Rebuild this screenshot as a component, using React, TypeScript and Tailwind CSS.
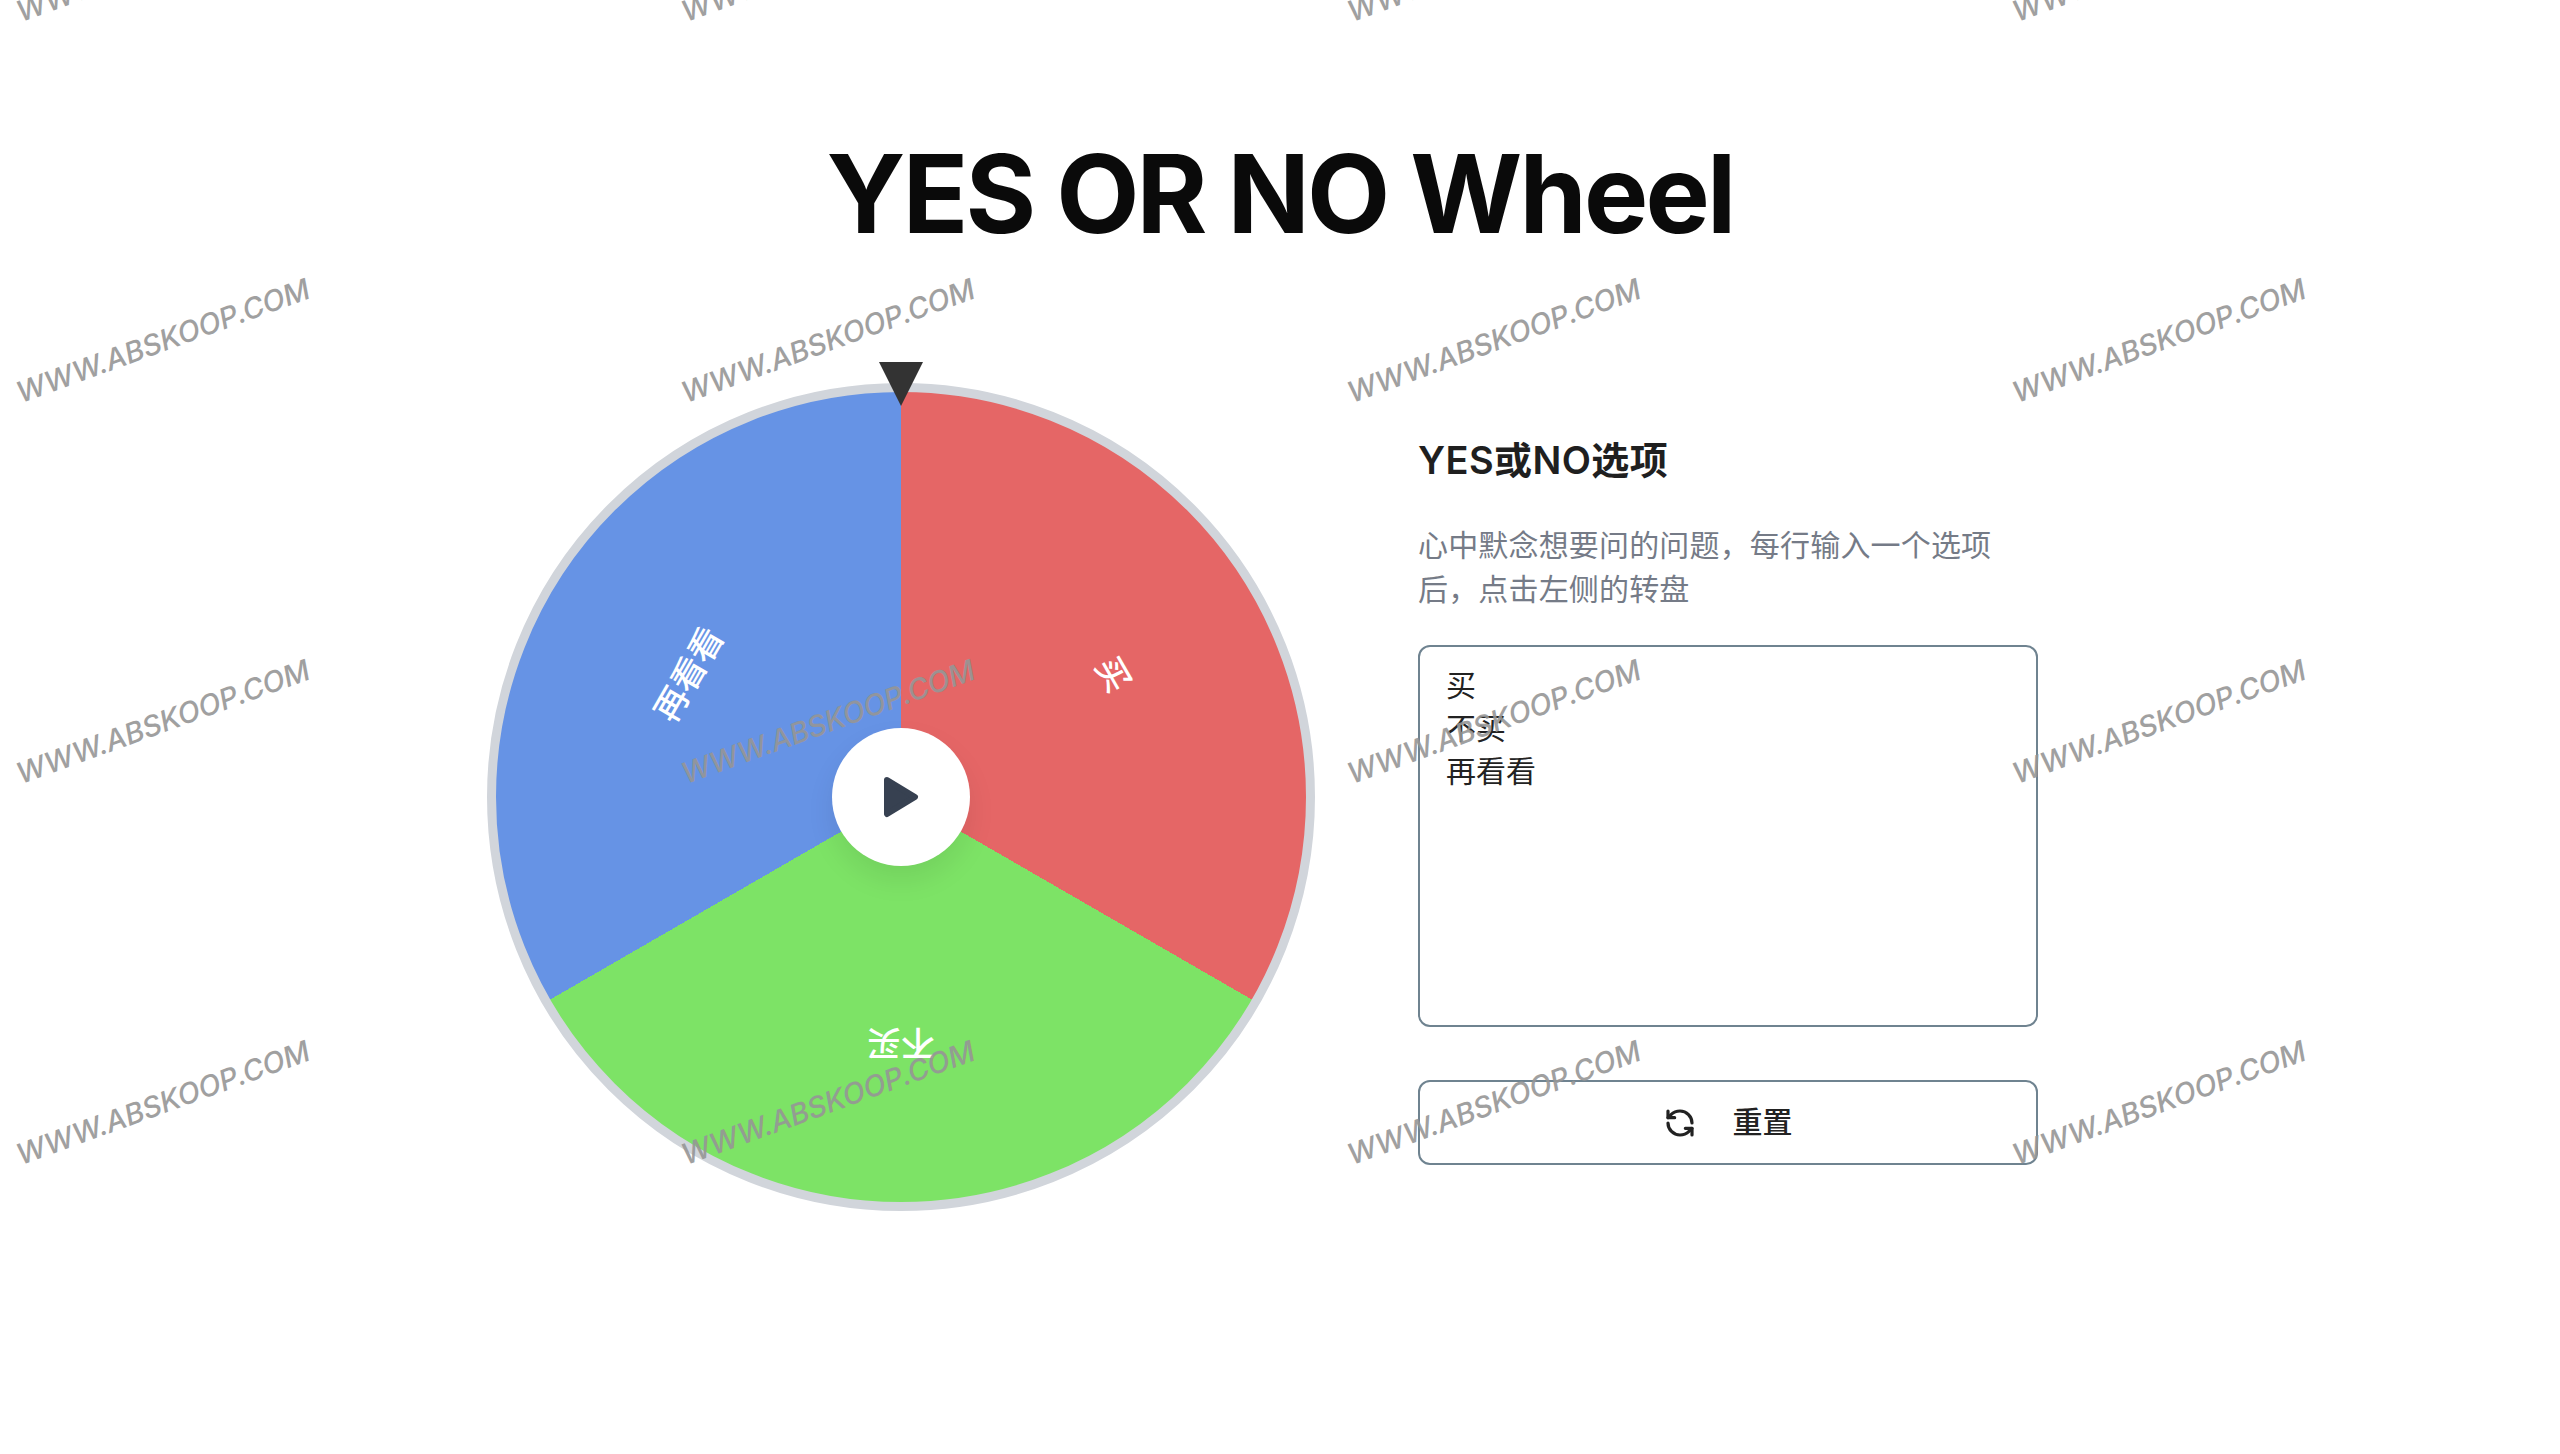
import { RefreshCcw } from 'lucide-react';

const FONT = "font-['Inter','Noto_Sans_CJK_SC',sans-serif]";

const watermarks = Array.from({ length: 16 }, (_, i) => i);

function Watermarks() {
  return (
    <div className="absolute -left-[170px] -top-[231px] grid grid-cols-[repeat(4,665.5px)] auto-rows-[381px] pointer-events-none">
      {watermarks.map(i => (
        <div key={i} className="flex items-center justify-center">
          <span className="-rotate-[20deg] italic whitespace-nowrap text-[29px] leading-none font-medium tracking-[-0.1px] text-[#969696] opacity-90 font-['Inter',sans-serif]">
            WWW.ABSKOOP.COM
          </span>
        </div>
      ))}
    </div>
  );
}

function Wheel() {
  return (
    <div className="relative w-[828px] h-[828px] flex-shrink-0">
      <div className="relative w-full h-full rounded-full border-[9px] border-[#d1d5db] bg-[conic-gradient(#e56666_0deg_120deg,#7de366_120deg_240deg,#6693e5_240deg_360deg)] overflow-hidden">
        {/* Labels */}
        <div className="absolute inset-0 flex items-center justify-center rotate-[60deg]">
          <span className="-translate-y-[246px] text-[34px] font-medium text-white">买</span>
        </div>
        <div className="absolute inset-0 flex items-center justify-center rotate-[180deg]">
          <span className="-translate-y-[247px] text-[34px] font-medium text-white">不买</span>
        </div>
        <div className="absolute inset-0 flex items-center justify-center rotate-[300deg]">
          <span className="-translate-y-[246px] text-[34px] font-medium text-white">再看看</span>
        </div>
      </div>

      {/* Pointer */}
      <svg className="absolute -top-[21px] left-[392px] w-[44px] h-[44px]" viewBox="0 0 44 44">
        <polygon points="0,0 44,0 22,44" fill="#333333" />
      </svg>

      {/* Spin button */}
      <div className="absolute inset-0 flex items-center justify-center">
        <button className="w-[138px] h-[138px] rounded-full bg-white shadow-[0_14px_28px_rgba(0,0,0,0.08)] flex items-center justify-center">
          <svg className="w-[36px] h-[42px]" viewBox="0 0 36 42">
            <path d="M4 4 L32 21 L4 38 Z" fill="#374151" stroke="#374151" strokeWidth="6" strokeLinejoin="round" />
          </svg>
        </button>
      </div>
    </div>
  );
}

export default function App() {
  return (
    <div className={`relative h-[1454px] overflow-hidden bg-white ${FONT}`}>
      <h1 className="pt-[140px] text-center text-[108px] leading-none font-bold tracking-[-2.8px] text-[#0a0a0a]">YES OR NO Wheel</h1>

      <div className="flex items-start pl-[487px] mt-[135px] gap-[103px]">
        <Wheel />

        <div className="w-[620px] pt-[53px] flex flex-col">
          <h2 className="text-[38px] leading-[48px] font-semibold tracking-[0.4px] text-[#1f1f1f]">YES或NO选项</h2>
          <p className="mt-[39px] text-[30px] leading-[44px] tracking-[0.17px] font-normal text-[#757b87]">
            心中默念想要问的问题，每行输入一个选项后，点击左侧的转盘
          </p>
          <textarea
            className="mt-[34px] h-[382px] w-full resize-none rounded-[12px] border-2 border-[#6f8390] pl-[26px] pr-[27px] py-[17px] text-[30px] leading-[43px] text-[#222222] outline-none"
            defaultValue={'买\n不买\n再看看'}
          />
          <button className="mt-[53px] h-[85px] w-full rounded-[12px] border-2 border-[#6f8390] flex items-center justify-center gap-[37px] text-[30px] font-medium text-[#222222]">
            <RefreshCcw className="w-[32px] h-[32px]" strokeWidth={2.4} />
            重置
          </button>
        </div>
      </div>

      <Watermarks />
    </div>
  );
}
